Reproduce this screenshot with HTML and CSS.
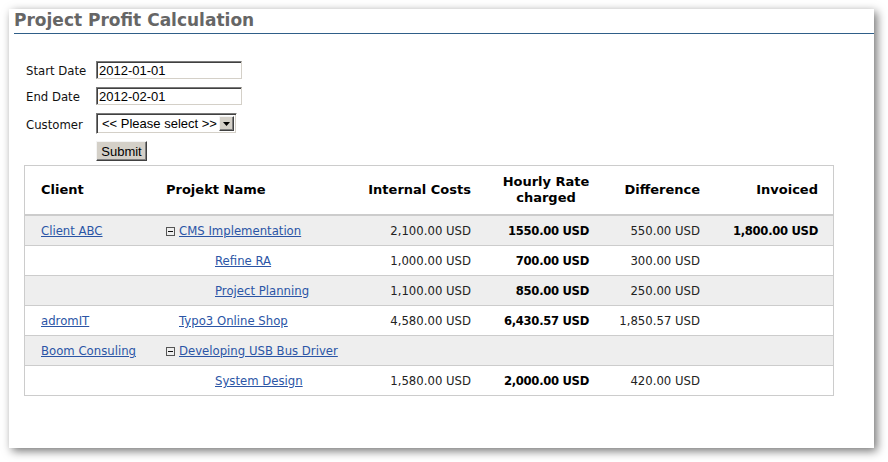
FILE: index.html
```html
<!DOCTYPE html>
<html lang="en">
<head>
<meta charset="utf-8">
<title>Project Profit Calculation</title>
<link rel="stylesheet" href="styles.css">
</head>
<body>
<div class="window">
  <h1 class="title">Project Profit Calculation</h1>
  <form class="filter">
    <label class="label" for="start">Start Date</label>
    <input class="field" id="start" type="text" value="2012-01-01">
    <label class="label" for="end">End Date</label>
    <input class="field" id="end" type="text" value="2012-02-01">
    <label class="label" for="customer">Customer</label>
    <div class="select-box">
      <select class="select" id="customer"><option>&lt;&lt; Please select &gt;&gt;</option></select>
      <span class="select-arrow"><svg width="7" height="4" viewBox="0 0 7 4"><path d="M0 0h7L3.5 4z" fill="#000"/></svg></span>
    </div>
    <button class="submit" type="button">Submit</button>
  </form>
  <table class="report">
    <colgroup>
      <col class="c-client"><col class="c-project"><col class="c-costs"><col class="c-rate"><col class="c-diff"><col class="c-inv">
    </colgroup>
    <thead>
      <tr>
        <th class="left">Client</th>
        <th class="left">Projekt Name</th>
        <th class="num">Internal Costs</th>
        <th class="center">Hourly Rate<br>charged</th>
        <th class="num">Difference</th>
        <th class="num last">Invoiced</th>
      </tr>
    </thead>
    <tbody>
      <tr class="alt">
        <td class="left"><a href="#">Client ABC</a></td>
        <td class="left parent"><svg class="toggle" width="9" height="9" viewBox="0 0 9 9"><rect x=".5" y=".5" width="8" height="8" fill="none" stroke="#555"/><path d="M2 4.5h5" stroke="#111"/></svg><a href="#">CMS Implementation</a></td>
        <td class="num">2,100.00 USD</td>
        <td class="num strong">1550.00 USD</td>
        <td class="num">550.00 USD</td>
        <td class="num strong last">1,800.00 USD</td>
      </tr>
      <tr>
        <td class="left"></td>
        <td class="left child"><a href="#">Refine RA</a></td>
        <td class="num">1,000.00 USD</td>
        <td class="num strong">700.00 USD</td>
        <td class="num">300.00 USD</td>
        <td class="num last"></td>
      </tr>
      <tr class="alt">
        <td class="left"></td>
        <td class="left child"><a href="#">Project Planning</a></td>
        <td class="num">1,100.00 USD</td>
        <td class="num strong">850.00 USD</td>
        <td class="num">250.00 USD</td>
        <td class="num last"></td>
      </tr>
      <tr>
        <td class="left"><a href="#">adromIT</a></td>
        <td class="left plain"><a href="#">Typo3 Online Shop</a></td>
        <td class="num">4,580.00 USD</td>
        <td class="num strong">6,430.57 USD</td>
        <td class="num">1,850.57 USD</td>
        <td class="num last"></td>
      </tr>
      <tr class="alt">
        <td class="left"><a href="#">Boom Consuling</a></td>
        <td class="left parent"><svg class="toggle" width="9" height="9" viewBox="0 0 9 9"><rect x=".5" y=".5" width="8" height="8" fill="none" stroke="#555"/><path d="M2 4.5h5" stroke="#111"/></svg><a href="#">Developing USB Bus Driver</a></td>
        <td class="num"></td>
        <td class="num strong"></td>
        <td class="num"></td>
        <td class="num last"></td>
      </tr>
      <tr class="final">
        <td class="left"></td>
        <td class="left child"><a href="#">System Design</a></td>
        <td class="num">1,580.00 USD</td>
        <td class="num strong">2,000.00 USD</td>
        <td class="num">420.00 USD</td>
        <td class="num last"></td>
      </tr>
    </tbody>
  </table>
</div>
</body>
</html>
```

FILE: styles.css
```css
html, body {
  margin: 0;
  background: #fff;
}
body {
  font-family: "DejaVu Sans", Verdana, sans-serif;
  font-size: 11.7px;
  color: #222;
  min-height: 462px;
}
.window {
  margin: 9px 0 0 9px;
  width: 865px;
  height: 439px;
  padding-top: 1px;
  box-sizing: border-box;
  background: #fff;
  box-shadow: 3px 3px 9px rgba(0, 0, 0, 0.55);
}
.title {
  margin: 0 0 0 5px;
  padding-bottom: 3px;
  font-size: 17px;
  line-height: 20px;
  font-weight: bold;
  color: #666;
  border-bottom: 1px solid #2f5e88;
}
.filter {
  display: grid;
  grid-template-columns: 70px auto;
  justify-content: start;
  align-items: center;
  row-gap: 8px;
  margin: 27px 0 0 17px;
}
.label {
  color: #111;
  padding-top: 2px;
}
.field {
  width: 146px;
  height: 18px;
  box-sizing: border-box;
  margin: 0;
  padding: 0 2px;
  border: 1px solid;
  border-color: #7a7a7a #d4d0c8 #d4d0c8 #7a7a7a;
  box-shadow: inset 1px 1px 0 #404040;
  font-family: "Liberation Sans", Arial, sans-serif;
  font-size: 13px;
  color: #000;
  background: #fff;
  outline: none;
}
.select-box {
  display: flex;
  width: 141px;
  height: 21px;
  box-sizing: border-box;
  border: 1px solid;
  border-color: #7a7a7a #fff #fff #7a7a7a;
  box-shadow: inset 1px 1px 0 #404040, inset -1px -1px 0 #d4d0c8;
  padding: 2px;
  background: #fff;
}
.select {
  flex: 1;
  min-width: 0;
  appearance: none;
  -webkit-appearance: none;
  border: 0;
  margin: 0;
  padding: 0 0 0 3px;
  background: transparent;
  font-family: "Liberation Sans", Arial, sans-serif;
  font-size: 13px;
  color: #000;
  outline: none;
}
.select-arrow {
  display: flex;
  align-items: center;
  justify-content: center;
  width: 15px;
  box-sizing: border-box;
  background: #d4d0c8;
  border: 1px solid;
  border-color: #f4f4f4 #404040 #404040 #f4f4f4;
  box-shadow: inset -1px -1px 0 #808080;
}
.submit {
  grid-column: 2;
  justify-self: start;
  width: 51px;
  height: 20px;
  margin: -1px 0 0;
  padding: 0;
  box-sizing: border-box;
  background: #d4d0c8;
  border: 1px solid;
  border-color: #f4f4f4 #404040 #404040 #f4f4f4;
  box-shadow: inset -1px -1px 0 #808080;
  font-family: "Liberation Sans", Arial, sans-serif;
  font-size: 13px;
  color: #000;
}
.report {
  margin: 4px 0 0 15px;
  width: 810px;
  table-layout: fixed;
  border-collapse: separate;
  border-spacing: 0;
  border: 1px solid #ccc;
}
.c-client { width: 125px; }
.c-project { width: 190px; }
.c-costs { width: 147px; }
.c-rate { width: 118px; }
.c-diff { width: 111px; }
.c-inv { width: 117px; }
.report th {
  height: 48px;
  padding: 0 16px;
  font-size: 13px;
  line-height: 16px;
  font-weight: bold;
  color: #000;
  border-bottom: 2px solid #ccc;
  background: #fff;
  vertical-align: middle;
  white-space: nowrap;
}
.report th.center {
  padding: 0;
}
.report th.num {
  padding-left: 0;
}
.report td {
  height: 28px;
  padding: 1px 16px 0;
  line-height: 14px;
  vertical-align: middle;
  border-bottom: 1px solid #ccc;
  white-space: nowrap;
}
.report td.num {
  padding-left: 0;
}
.report tr.final td {
  border-bottom: 0;
}
.report tr.alt td {
  background: #eee;
}
.left { text-align: left; }
.num { text-align: right; }
.center { text-align: center; }
.report .last { padding-right: 15px; }
.report td.strong {
  font-weight: bold;
  font-size: 11.6px;
  letter-spacing: -0.3px;
  color: #000;
}
.report a {
  color: #2b55a6;
  text-decoration: underline;
}
.report td.plain { padding-left: 29px; }
.report td.child { padding-left: 65px; }
.toggle {
  vertical-align: -1px;
  margin-right: 4px;
}
```
